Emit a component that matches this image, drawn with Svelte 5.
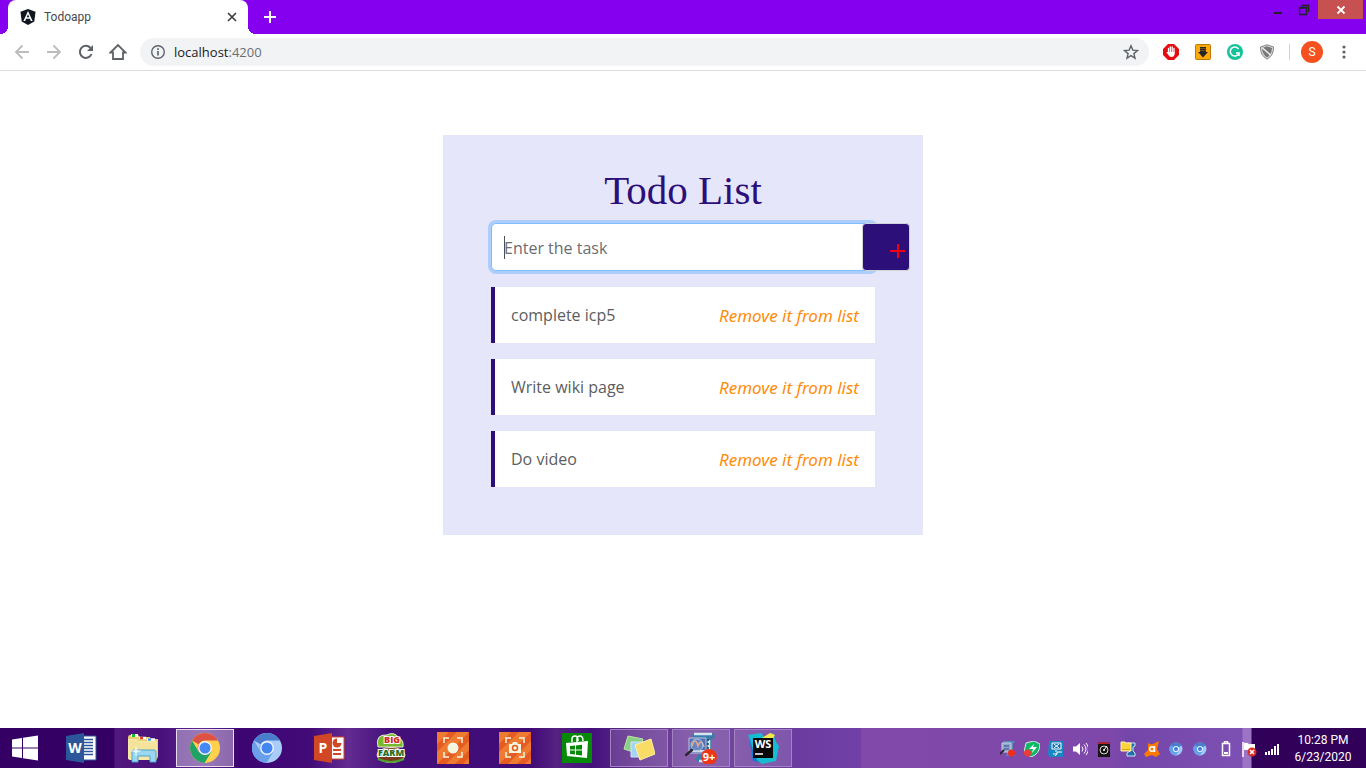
<script>
  let tasks = $state(['complete icp5', 'Write wiki page', 'Do video']);
  let draft = $state('');

  function add(event) {
    event.preventDefault();
    if (draft.trim()) tasks.push(draft.trim());
    draft = '';
  }

  function remove(index) {
    tasks.splice(index, 1);
  }

  const apps = [
    { id: 'word', label: 'Word' },
    { id: 'explorer', label: 'File Explorer' },
    { id: 'chrome', label: 'Chrome', state: 'active' },
    { id: 'chromium', label: 'Chromium' },
    { id: 'powerpoint', label: 'PowerPoint' },
    { id: 'farm', label: 'Big Farm' },
    { id: 'recorder', label: 'Screen recorder' },
    { id: 'capture', label: 'Screen capture' },
    { id: 'store', label: 'Store' },
    { id: 'notes', label: 'Sticky Notes', state: 'open' },
    { id: 'zip', label: 'WinZip', state: 'open' },
    { id: 'webstorm', label: 'WebStorm', state: 'open' }
  ];

  const tray = ['scan', 'shield', 'display', 'volume', 'disc', 'archive', 'avast', 'chromium', 'chromium'];
  const status = ['battery', 'flag', 'signal'];
</script>

{#snippet taskIcon(id)}
  <svg width="32" height="32" viewBox="0 0 32 32" aria-hidden="true">
    {#if id === 'word'}
      <path d="M17 4h14v24H17z" fill="#fff" stroke="#2b579a" />
      <path d="M19 7.500h9M19 10.500h9M19 13.500h9M19 16.500h9M19 19.500h9M19 22.500h9" stroke="#2b579a" stroke-width="1.500" />
      <path d="M1 4 19 1v30L1 28z" fill="#2b579a" />
      <text x="10" y="21" font-size="14" font-weight="700" text-anchor="middle" fill="#fff">W</text>
    {:else if id === 'explorer'}
      <path d="M1 6q0-3 2-3h8l2 2h10l1 2h7v18l-2 3H3l-2-2z" fill="#e8ce75" />
      <path d="M4 3.500h7" stroke="#fff" stroke-width="3" />
      <path d="M5 3.500h3" stroke="#12c42c" stroke-width="3" />
      <path d="M12 6h7" stroke="#fff" stroke-width="2.500" />
      <path d="M13 6h3" stroke="#d9412b" stroke-width="2.500" />
      <path d="M20 7.500h8" stroke="#fff" stroke-width="2.500" />
      <path d="M21 7.500h3" stroke="#3b9dea" stroke-width="2.500" />
      <path d="M1 7h9l2 2h18v18l-1 1H3l-2-1z" fill="#f7e7a6" />
      <path d="M3 9h8l2 2h16v12H3z" fill="#f5e29b" />
      <path d="M5 30V20q0-2 2-2h20q2 0 2 2v10h-6v-6H11v6z" fill="#9bd7ee" stroke="#4ba5cd" />
      <path d="m9 13 1 5 5 1-5 1-1 5-1-5-5-1 5-1z" fill="#fff" opacity=".8" />
    {:else if id === 'chrome'}
      <circle cx="16" cy="16" r="15" fill="#ffd04b" />
      <path d="M16 16 3 8.500A15 15 0 0 1 29 8.500H16a7.500 7.500 0 0 0-6.500 11z" fill="#de5145" />
      <path d="M3 8.500A15 15 0 0 0 15.500 31l7-11.500-6.500-3.500-6.500 3.500z" fill="#20a366" />
      <circle cx="16" cy="16" r="7" fill="#f3f4f5" />
      <circle cx="16" cy="16" r="5.500" fill="#4587f4" />
    {:else if id === 'chromium'}
      <circle cx="16" cy="16" r="15" fill="#a9ccf8" />
      <path d="M16 16 3 8.500A15 15 0 0 1 29 8.500H16a7.500 7.500 0 0 0-6.500 11z" fill="#4a7ccc" />
      <path d="M3 8.500A15 15 0 0 0 15.500 31l7-11.500-6.500-3.500-6.500 3.500z" fill="#6a9fea" />
      <circle cx="16" cy="16" r="7" fill="#eaf3ff" />
      <circle cx="16" cy="16" r="5.500" fill="#4486ef" />
    {:else if id === 'powerpoint'}
      <path d="M17 5h14v22H17z" fill="#fff" stroke="#d24726" />
      <path d="M20 18h8M20 22h8" stroke="#d24726" stroke-width="2" />
      <circle cx="24" cy="11" r="4.500" fill="#d24726" />
      <path d="M24 11V6h5v5z" fill="#fff" />
      <path d="M1 4 19 1v30L1 28z" fill="#d24726" />
      <text x="10" y="21" font-size="14" font-weight="700" text-anchor="middle" fill="#fff">P</text>
    {:else if id === 'farm'}
      <ellipse cx="16" cy="23" rx="14" ry="7.500" fill="#7a3a1c" stroke="#e9dcc0" />
      <path d="M3 15Q0 2 12 3q7-4 12 3 5 2 4 9z" fill="#77b82e" stroke="#e9f1d5" />
      <path d="M3 27q13 6 26 0" fill="none" stroke="#4ea22f" stroke-width="2" />
      <text x="17" y="11" font-size="9" font-weight="800" text-anchor="middle" fill="#d22a1e" stroke="#fff" stroke-width="2" paint-order="stroke">BIG</text>
      <text x="16" y="24" font-size="9" font-weight="800" text-anchor="middle" fill="#1f6d2a" stroke="#fff" stroke-width="2" paint-order="stroke">FARM</text>
    {:else if id === 'recorder' || id === 'capture'}
      <path d="M0 0h32v32H0z" fill="#ee7b32" />
      <path d="M0 12 12 0h8L0 20zM0 32 32 0v9L9 32zM18 32l14-14v8l-6 6z" fill="#e55c22" />
      <path d="M7 11V6h5M20 6h5v5M25 20v5h-5M12 25H7v-5" fill="none" stroke="#f4f3df" stroke-width="1.500" />
      {#if id === 'recorder'}
        <circle cx="16" cy="16" r="5.500" fill="#f4f6e0" />
      {:else}
        <path d="M10 12h3l1-2h4l1 2h3v9H10z" fill="#f4f6e0" />
        <circle cx="16" cy="16" r="2.500" fill="none" stroke="#e55c22" stroke-width="1.500" />
      {/if}
    {:else if id === 'store'}
      <path d="M1 1h30v30H1z" fill="#058a08" />
      <path d="M11 10V7q0-3 3-3 3 0 3 5M16 10V7q0-3 3-3 3 0 3 5" fill="none" stroke="#fff" stroke-width="1.500" />
      <path d="m5 11 22-2-1 17-20-2z" fill="#fff" />
      <path d="m9 14 5-.500v4H9zM15 13.400l6-.600v4.700h-6zM9 18.500h5v4L9 22zM15 18.500h6v5l-6-.700z" fill="#058a08" />
    {:else if id === 'notes'}
      <path d="m5 4 15 3-4 15L1 17z" fill="#8dcf82" stroke="#b9e3ae" />
      <path d="M8 10h14v15H8z" fill="#a4d4f8" stroke="#cbe8ff" />
      <path d="m12 13 16-6 4 15-15 6z" fill="#f8dc65" stroke="#fff0a3" />
    {:else if id === 'zip'}
      <path d="M8 1h21l1 4-4 3v14l4 3v5H13l-3-3 4-5V8L7 4z" fill="#3a7dab" />
      <path d="M9 2h18M24 8v14M14 29h14" stroke="#d5e6f0" stroke-width="2.500" />
      <path d="M20 8h4M20 12h4M20 16h4M20 20h4" stroke="#1d4770" stroke-width="1.500" />
      <path d="M4 6h17v15H4z" fill="#5470b4" stroke="#b6c5df" />
      <path d="M4 19h17" stroke="#d5dce8" stroke-width="2" />
      <path d="M7 14q3-10 6 0 3-8 6 1" fill="none" stroke="#f6a06d" stroke-width="1.500" />
      <circle cx="12" cy="13" r="6" fill="#b3d8ff" fill-opacity=".2" stroke="#a9c4e4" />
      <path d="m7 18-6 5" stroke="#292834" stroke-width="2.500" stroke-linecap="round" />
      <circle cx="24" cy="25" r="8" fill="#ed3517" />
      <text x="24" y="29" font-size="11" font-weight="700" text-anchor="middle" fill="#fff">9+</text>
    {:else}
      <path d="M1 3 14 1l4 5 8-5 3 9 3 4-3 15-14 3-7-5z" fill="#16bdd0" />
      <path d="m15 6 8-5 5 2-3 5z" fill="#f5e94d" />
      <path d="m2 4 6 21 4 5-6-1z" fill="#087ed8" />
      <path d="M6 6h20v20H6z" fill="#080808" />
      <text x="16" y="16" font-size="11" font-weight="700" text-anchor="middle" fill="#fff">WS</text>
      <path d="M8 22h8" stroke="#fff" stroke-width="1.500" />
    {/if}
  </svg>
{/snippet}

{#snippet trayIcon(id)}
  <svg width="16" height="16" viewBox="0 0 16 16" aria-hidden="true">
    {#if id === 'scan'}
      <path d="M3 0h12l-2 3v8l2 4H6l1-3z" fill="#518dbd" />
      <path d="M2 2h9v9H2z" fill="#91a4c9" stroke="#c6d1e1" />
      <path d="m4 9-4 4" stroke="#292834" stroke-width="2" />
      <path d="M4 5h5M4 8h5" stroke="#304b91" />
      <circle cx="11.500" cy="12" r="3.500" fill="#ef2e1a" />
    {:else if id === 'shield'}
      <path d="M2 2 10 0l6 3q0 10-9 13L0 11z" fill="#10b866" stroke="#d4e9df" />
      <path d="m10 3-5 5h4l-1 4 5-6H9z" fill="#fff" />
      <circle cx="3.500" cy="12" r="3.500" fill="#ef3b36" />
    {:else if id === 'display'}
      <path d="M1 0h14v16H2L0 14z" fill="#1886c3" />
      <path d="M4 2h9v6H4z" fill="#1676b5" stroke="#fff" />
      <path d="m6 3 5 4M11 3 6 7M8 9v2M5 13h4v-2h5M7 15l2-2" fill="none" stroke="#fff" />
    {:else if id === 'volume'}
      <path d="M1 5.500h3L8 2v12L4 10.500H1z" fill="#fff" />
      <path d="M10 5.500q2 2.500 0 5M12 3.500q4 4.500 0 9M14 2q5 6 0 12" fill="none" stroke="#fff" />
    {:else if id === 'disc'}
      <path d="M2 1h12v15H2z" fill="#181315" />
      <path d="M2 1h12v2H2z" fill="#a82538" />
      <circle cx="8" cy="9" r="4" fill="none" stroke="#d9d4d4" />
      <circle cx="8" cy="9" r="1" fill="#fff" />
      <path d="m8 9 3-4" stroke="#fff" />
    {:else if id === 'archive'}
      <path d="M7 2h8v3l-2 1v4l2 2v3H7v-3l3-2V6L7 5z" fill="#1f6eae" stroke="#d0e2ee" />
      <path d="M1 1h4l1 1h5v8H1z" fill="#fcd43b" stroke="#fff1b8" />
      <path d="M2 8.500h8" stroke="#dba30c" />
    {:else if id === 'avast'}
      <path d="M4 2q3 2 5 1l6-3-1 4-1 4 3 5-4 3-4-2-6 2-2-3 4-4z" fill="#ff7800" />
      <circle cx="8" cy="8" r="2.300" fill="none" stroke="#fff" stroke-width="1.500" />
      <path d="M10.500 5v6" fill="none" stroke="#fff" stroke-width="1.500" />
    {:else if id === 'chromium'}
      <circle cx="8" cy="8" r="6.500" fill="#9ec7fa" />
      <path d="M8 8 2.500 4.500a6.500 6.500 0 0 1 11 0z" fill="#477dcb" />
      <path d="M2.500 4.500A6.500 6.500 0 0 0 8 14.500L11 9z" fill="#689fe9" />
      <circle cx="8" cy="8" r="3" fill="#ecf4ff" />
      <circle cx="8" cy="8" r="2" fill="#397de1" />
    {:else if id === 'battery'}
      <path d="M4.500 2.500h7v12h-7zM6.500 2V.500h3V2" fill="none" stroke="#fff" stroke-width="1.500" />
      <path d="M6 11h4v2H6z" fill="#fff" />
    {:else if id === 'flag'}
      <path d="M2 1v15" stroke="#fff" stroke-width="1.500" />
      <path d="M3 2q3-1 5 1h6v7H8q-2-2-5-1z" fill="#fff" />
      <circle cx="11" cy="11" r="4.500" fill="#d92c25" />
      <path d="m9 9 4 4m0-4-4 4" stroke="#fff" stroke-width="1.500" />
    {:else}
      <path d="M1 11h2v3H1zM4 10h2v4H4zM7 8h2v6H7zM10 5h2v9h-2zM13 3h2v11h-2z" fill="#fff" />
    {/if}
  </svg>
{/snippet}

<div class="screen">
  <header class="tabs">
    <div class="tab">
      <svg width="16" height="16" viewBox="0 0 16 16" aria-hidden="true">
        <path d="m8 0 7.500 2.700-1.200 9.800L8 16l-6.300-3.500L.500 2.700z" fill="#111720" />
        <path fill-rule="evenodd" d="M8 2 3.400 12h1.800l.900-2.200h3.800l.900 2.200h1.800zm0 3.200 1.300 3.100H6.700z" fill="#fff" />
      </svg>
      <span class="tab-title">Todoapp</span>
      <button class="plain" aria-label="Close tab">
        <svg width="16" height="16" viewBox="0 0 16 16"><path d="m4 4 8 8m0-8-8 8" stroke="#3c4043" stroke-width="1.700" /></svg>
      </button>
    </div>
    <button class="plain new-tab" aria-label="New tab">
      <svg width="16" height="16" viewBox="0 0 16 16"><path d="M8 2v12M2 8h12" stroke="#fff" stroke-width="2" /></svg>
    </button>
    <div class="window-buttons">
      <button class="plain win" aria-label="Minimize">
        <svg width="16" height="20" viewBox="0 0 16 20"><path d="M4 13h8" stroke="#24202b" stroke-width="2" /></svg>
      </button>
      <button class="plain win" aria-label="Restore">
        <svg width="16" height="20" viewBox="0 0 16 20"><path d="M4.500 5.500h7V12M2.500 7.500h7v7h-7zM2 8h8" fill="none" stroke="#24202b" stroke-width="1.300" /></svg>
      </button>
      <button class="plain win-close" aria-label="Close window">
        <svg width="10" height="10" viewBox="0 0 10 10"><path d="m1.500 1.500 7 7m0-7-7 7" stroke="#fff" stroke-width="1.800" /></svg>
      </button>
    </div>
  </header>

  <nav class="toolbar" aria-label="Browser">
    <button class="plain tool" aria-label="Back">
      <svg width="16" height="16" viewBox="0 0 16 16"><path d="M15 8H2m6.500-6.500L2 8l6.500 6.500" fill="none" stroke="#babcbe" stroke-width="1.800" /></svg>
    </button>
    <button class="plain tool" aria-label="Forward">
      <svg width="16" height="16" viewBox="0 0 16 16"><path d="M1 8h13M7.500 1.500 14 8l-6.500 6.500" fill="none" stroke="#babcbe" stroke-width="1.800" /></svg>
    </button>
    <button class="plain tool" aria-label="Reload">
      <svg width="16" height="16" viewBox="0 0 16 16"><path d="M13.500 10A6 6 0 1 1 12.300 3.800L14 5.500" fill="none" stroke="#5f6368" stroke-width="2" /><path d="M15 1v6H9z" fill="#5f6368" /></svg>
    </button>
    <button class="plain tool" aria-label="Home">
      <svg width="18" height="18" viewBox="0 0 18 18"><path d="M1.500 9.500 9 2l7.500 7.500H14V16H4V9.500z" fill="none" stroke="#5f6368" stroke-width="1.800" /></svg>
    </button>
    <div class="address">
      <svg width="16" height="16" viewBox="0 0 16 16" aria-hidden="true"><circle cx="8" cy="8" r="6.300" fill="none" stroke="#5f6368" stroke-width="1.400" /><path d="M8 7v4.500M8 4.300v1.600" stroke="#5f6368" stroke-width="1.700" /></svg>
      <span class="url">localhost<span>:4200</span></span>
      <button class="plain" aria-label="Bookmark this page">
        <svg width="16" height="16" viewBox="0 0 16 16"><path d="m8 1.800 1.800 4.300 4.700.400-3.600 3.100 1.100 4.600L8 11.700l-4 2.500 1.100-4.600-3.600-3.100 4.700-.400z" fill="none" stroke="#5f6368" stroke-width="1.400" /></svg>
      </button>
    </div>
    <button class="plain tool" aria-label="Ad blocker">
      <svg width="16" height="16" viewBox="0 0 16 16"><path d="M5 0h6l5 5v6l-5 5H5l-5-5V5z" fill="#e40d12" /><path d="M5.500 9V4.500M7.300 8V3M9.200 8V3M11 9V4.500" stroke="#fff" stroke-width="1.300" stroke-linecap="round" /><path d="M4.900 8h6.700v2.500Q11 13 8.500 13 6.500 13 5 10.500L3.300 8z" fill="#fff" /></svg>
    </button>
    <button class="plain tool" aria-label="Downloader">
      <svg width="16" height="16" viewBox="0 0 16 16"><rect x=".5" y=".5" width="15" height="15" rx="1" fill="#ffaa08" stroke="#bd7900" /><path d="M5 3h6v5h2l-5 5.500L3 8h2z" fill="#24282c" /><path d="M5 4.500h6M5 6.500h6" stroke="#75511e" /></svg>
    </button>
    <button class="plain tool" aria-label="Grammarly">
      <svg width="16" height="16" viewBox="0 0 16 16"><circle cx="8" cy="8" r="8" fill="#15c39a" /><path d="M11.500 5A4.500 4.500 0 1 0 12 9H9m3 0v3" fill="none" stroke="#fff" stroke-width="1.500" /></svg>
    </button>
    <button class="plain tool" aria-label="Tracking protection">
      <svg width="16" height="16" viewBox="0 0 16 16"><path d="M8 .800 14.500 3Q15 11 8 15.200 1 11 1.500 3z" fill="#dedede" stroke="#818181" /><path d="m3 4 5-1.700L13 4q0 6-5 9.500Q3 10 3 4z" fill="#777" /><path d="m3.500 4 8 7" stroke="#f2f2f2" stroke-width="1.500" /></svg>
    </button>
    <span class="divider"></span>
    <button class="plain avatar" aria-label="Profile S">S</button>
    <button class="plain menu" aria-label="Menu">
      <svg width="16" height="16" viewBox="0 0 16 16" fill="#5f6368"><circle cx="8" cy="3" r="1.600" /><circle cx="8" cy="8" r="1.600" /><circle cx="8" cy="13" r="1.600" /></svg>
    </button>
  </nav>

  <main>
    <section class="panel">
      <h1>Todo List</h1>
      <form onsubmit={add}>
        <input type="text" aria-label="Task" placeholder="Enter the task" bind:value={draft} />
        {#if !draft}<span class="caret"></span>{/if}
        <button class="add" aria-label="Add task">
          <svg width="16" height="16" viewBox="0 0 16 16"><path d="M8 1v14M0 8h15" stroke="#f00014" stroke-width="2" /></svg>
        </button>
      </form>
      <ul>
        {#each tasks as task, i}
          <li>
            <span>{task}</span>
            <button class="plain remove" onclick={() => remove(i)}>Remove it from list</button>
          </li>
        {/each}
      </ul>
    </section>
  </main>

  <footer class="taskbar">
    <button class="plain start" aria-label="Start">
      <svg width="26" height="26" viewBox="0 0 26 26"><path d="M0 4.500 10 3v9.500H0zM11 2.800 26 .500v12H11zM0 13.500h10V23L0 21.500zM11 13.500h15v12l-15-2.300z" fill="#fff" /></svg>
    </button>
    <div class="apps">
      {#each apps as app}
        <button class="plain app {app.state ?? ''}" aria-label={app.label}>{@render taskIcon(app.id)}</button>
      {/each}
    </div>
    <div class="tray">
      {#each tray as id}<span class="tray-item">{@render trayIcon(id)}</span>{/each}
    </div>
    <div class="status">
      {#each status as id}<span class="status-item">{@render trayIcon(id)}</span>{/each}
    </div>
    <div class="clock"><span>10:28 PM</span><span>6/23/2020</span></div>
  </footer>
</div>

<style>
  :global(body) { margin: 0; }
  .screen {
    min-height: 100vh;
    display: flex;
    flex-direction: column;
    background: #fff;
    font-family: "Segoe UI", "Open Sans", sans-serif;
  }
  .screen * { box-sizing: border-box; }
  svg { display: block; flex: none; }
  .plain {
    display: flex;
    align-items: center;
    justify-content: center;
    flex: none;
    padding: 0;
    border: 0;
    background: none;
    font-family: inherit;
    color: inherit;
  }

  .tabs { display: flex; height: 34px; padding-left: 8px; background: #8400ee; }
  .tab {
    position: relative;
    display: flex;
    align-items: center;
    gap: 8px;
    width: 240px;
    padding: 0 8px 0 12px;
    border-radius: 8px 8px 0 0;
    background: #fff;
  }
  .tab::before, .tab::after {
    content: "";
    position: absolute;
    bottom: 0;
    width: 8px;
    height: 8px;
  }
  .tab::before { left: -8px; background: radial-gradient(circle at 0 0, #8400ee 8px, #fff 8px); }
  .tab::after { right: -8px; background: radial-gradient(circle at 100% 0, #8400ee 8px, #fff 8px); }
  .tab-title { flex: 1; font-family: "Segoe UI", Roboto, sans-serif; font-size: 12px; color: #45494d; }
  .new-tab { width: 44px; }
  .window-buttons { display: flex; align-items: flex-start; margin-left: auto; padding-right: 3px; }
  .win { width: 27px; height: 19px; }
  .win-close { width: 45px; height: 19px; background: #c75050; }

  .toolbar {
    display: flex;
    align-items: center;
    height: 37px;
    padding: 0 6px;
    border-bottom: 1px solid #dadce0;
  }
  .tool { width: 32px; height: 28px; }
  .address {
    flex: 1;
    display: flex;
    align-items: center;
    gap: 8px;
    height: 28px;
    margin: 0 6px;
    padding: 0 10px;
    border-radius: 14px;
    background: #f1f3f4;
  }
  .url { flex: 1; font-size: 13px; color: #202124; }
  .url span { color: #6b6f73; }
  .divider { width: 1px; height: 16px; margin: 0 11px 0 6px; background: #cfd1d4; }
  .avatar { width: 22px; height: 22px; border-radius: 50%; background: #f4511e; color: #fff; font-family: Roboto, sans-serif; font-size: 12px; }
  .menu { width: 32px; margin-left: 5px; }

  main { flex: 1; display: flex; align-items: flex-start; justify-content: center; padding: 64px 16px; }
  .panel {
    width: 480px;
    max-width: 100%;
    padding: 32px 48px 48px;
    background: #e6e6fa;
    font-family: "Comic Sans MS", "Open Sans", sans-serif;
    font-size: 16px;
    color: #5c5d60;
  }
  h1 {
    margin: 0 0 8px;
    font-family: "Liberation Serif", serif;
    font-size: 41px;
    font-weight: 400;
    line-height: 46px;
    padding-bottom: 2px;
    text-align: center;
    color: #2c0f78;
  }
  form { position: relative; }
  input {
    display: block;
    width: 100%;
    height: 48px;
    padding: 2px 48px 0 12px;
    border: 1px solid #80bdff;
    border-radius: 5px;
    outline: 0;
    background: #fff;
    box-shadow: 0 0 0 3px #adcdfb;
    font: inherit;
    color: inherit;
    caret-color: transparent;
  }
  input::placeholder { color: #6c6d70; opacity: 1; }
  .caret { position: absolute; left: 13px; top: 13px; width: 1px; height: 23px; background: #495057; }
  .add {
    position: absolute;
    right: -35px;
    top: 0;
    display: flex;
    align-items: center;
    justify-content: flex-end;
    width: 48px;
    height: 48px;
    padding: 8px 3px 0 0;
    border: 1px solid #ced4da;
    border-radius: 4px;
    background: #2c0f78;
  }
  ul { display: flex; flex-direction: column; gap: 16px; margin: 16px 0 0; padding: 0; list-style: none; }
  li {
    display: flex;
    align-items: center;
    justify-content: space-between;
    height: 56px;
    padding: 0 16px;
    border-left: 4px solid #2c0f78;
    background: #fff;
  }
  .remove { font-family: "Comic Sans MS", "Noto Sans", sans-serif; font-size: 17px; font-style: italic; color: #ff8c0a; }

  .taskbar {
    display: flex;
    align-items: center;
    height: 40px;
    color: #fff;
    background: linear-gradient(90deg,
      #350063 0 114px, #53187f 115px, #48107a 160px, #5c2890 205px, #3c0470 240px,
      #420b78 310px, #642b92 348px, #43107a 390px, #3f0a75 530px, #562180 556px,
      #43107a 590px, #62308f 640px, #7649a0 700px, #6b3b9f 790px, #7040a7 860px,
      #8049aa 862px, #7e48aa 1110px, #7446aa 1130px, #7d50b3 1242px, #9b74c6 1243px 1251px, #310059 1252px);
  }
  .start { width: 50px; height: 40px; }
  .apps { display: flex; gap: 4px; margin-left: 2px; }
  .app { width: 58px; height: 38px; }
  .app.open { border: 1px solid #a183c0; background: rgba(255, 255, 255, .14); }
  .app.active { border: 1px solid #e6dded; background: rgba(255, 255, 255, .38); }
  .tray, .status { display: flex; padding-top: 2px; }
  .tray { margin-left: auto; }
  .status { margin-left: 2px; }
  .tray-item { display: flex; justify-content: center; width: 24px; }
  .status-item { display: flex; justify-content: center; width: 23px; }
  .clock {
    display: flex;
    flex-direction: column;
    align-items: center;
    width: 80px;
    margin-right: 3px;
    padding-top: 2px;
    font-family: "Segoe UI", Roboto, sans-serif;
    font-size: 12px;
    line-height: 17px;
  }
</style>
